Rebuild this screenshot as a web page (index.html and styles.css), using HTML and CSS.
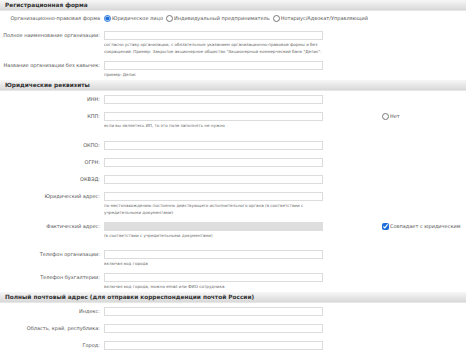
FILE: index.html
```html
<!DOCTYPE html>
<html lang="ru">
  <head>
    <meta charset="UTF-8" />
    <title>Регистрационная форма</title>
    <link rel="stylesheet" href="styles.css">
  </head>
  <body>
    <form class="reg-form">
      <div class="section-title">Регистрационная форма</div>

      <div class="row row-options">
        <label class="label">Организационно-правовая форма</label>
        <div class="options">
          <label class="opt"><input type="radio" name="kind" checked> Юридическое лицо</label>
          <label class="opt"><input type="radio" name="kind"> Индивидуальный предприниматель</label>
          <label class="opt"><input type="radio" name="kind"> Нотариус/Адвокат/Управляющий</label>
        </div>
      </div>

      <div class="row with-hint">
        <label class="label">Полное наименование организации:</label>
        <div class="field">
          <input type="text" class="text">
          <div class="hint">согласно уставу организации, с обязательным указанием организационно-правовой формы и без сокращений. Пример: Закрытое акционерное общество "Акционерный коммерческий банк "Делис".</div>
        </div>
      </div>

      <div class="row with-hint">
        <label class="label">Название организации без кавычек:</label>
        <div class="field">
          <input type="text" class="text">
          <div class="hint">пример: Делис</div>
        </div>
      </div>

      <div class="section-title">Юридические реквизиты</div>

      <div class="row">
        <label class="label">ИНН:</label>
        <div class="field"><input type="text" class="text"></div>
      </div>

      <div class="row with-hint">
        <label class="label">КПП:</label>
        <div class="field">
          <input type="text" class="text">
          <div class="hint">если вы являетесь ИП, то это поле заполнять не нужно</div>
        </div>
        <label class="extra"><input type="radio" name="kpp"> Нет</label>
      </div>

      <div class="row spaced">
        <label class="label">ОКПО:</label>
        <div class="field"><input type="text" class="text"></div>
      </div>

      <div class="row">
        <label class="label">ОГРН:</label>
        <div class="field"><input type="text" class="text"></div>
      </div>

      <div class="row">
        <label class="label">ОКВЭД:</label>
        <div class="field"><input type="text" class="text"></div>
      </div>

      <div class="row with-hint">
        <label class="label">Юридический адрес:</label>
        <div class="field">
          <input type="text" class="text">
          <div class="hint">по местонахождению постоянно действующего исполнительного органа (в соответствии с учредительными документами)</div>
        </div>
      </div>

      <div class="row with-hint">
        <label class="label">Фактический адрес:</label>
        <div class="field">
          <input type="text" class="text disabled" disabled>
          <div class="hint">(в соответствии с учредительными документами)</div>
        </div>
        <label class="extra"><input type="checkbox" checked> Совпадает с юридическим</label>
      </div>

      <div class="row with-hint spaced-sm">
        <label class="label">Телефон организации:</label>
        <div class="field">
          <input type="text" class="text">
          <div class="hint">включая код города</div>
        </div>
      </div>

      <div class="row with-hint">
        <label class="label">Телефон бухгалтерии:</label>
        <div class="field">
          <input type="text" class="text">
          <div class="hint">включая код города, можно email или ФИО сотрудника</div>
        </div>
      </div>

      <div class="section-title">Полный почтовый адрес (для отправки корреспонденции почтой России)</div>

      <div class="row">
        <label class="label">Индекс:</label>
        <div class="field"><input type="text" class="text"></div>
      </div>

      <div class="row">
        <label class="label">Область, край, республика:</label>
        <div class="field"><input type="text" class="text"></div>
      </div>

      <div class="row">
        <label class="label">Город:</label>
        <div class="field"><input type="text" class="text"></div>
      </div>
    </form>
  </body>
</html>
```

FILE: styles.css
```css
body {
  margin: 0;
  background: #fff;
  font-family: "DejaVu Sans", Verdana, sans-serif;
  font-size: 5px;
  color: #555;
}
.reg-form {
  width: 466px;
}
.section-title {
  height: 10px;
  line-height: 10px;
  padding-left: 5px;
  font-size: 5.8px;
  font-weight: bold;
  color: #333;
  background: linear-gradient(#f7f7f7, #d8d8d8);
  border-bottom: 1px solid #e6e6e6;
}
.row {
  display: grid;
  grid-template-columns: 100px 219px 1fr;
  column-gap: 4px;
  align-items: start;
  padding: 4px 0;
}
.row-options {
  padding-top: 3px;
}
.row.with-hint {
  padding-bottom: 2px;
}
.row.spaced {
  padding-top: 10px;
}
.row.spaced-sm {
  padding-top: 9px;
}
.label {
  text-align: right;
  line-height: 9px;
  white-space: nowrap;
}
.text {
  display: block;
  box-sizing: border-box;
  width: 219px;
  height: 9px;
  margin: 0;
  padding: 0 2px;
  border: 1px solid #dcdcdc;
  background: #fff;
  font: inherit;
}
.text.disabled {
  background: #dedede;
  border-color: #dedede;
}
.hint {
  margin-top: 1px;
  font-size: 4.1px;
  line-height: 7px;
  color: #666;
}
.options {
  grid-column: 2 / 4;
  display: flex;
  gap: 3px;
  line-height: 9px;
}
.opt, .extra {
  display: flex;
  align-items: center;
  gap: 1px;
  line-height: 9px;
  white-space: nowrap;
}
.extra {
  margin-left: 55px;
}
input[type="radio"],
input[type="checkbox"] {
  width: 7px;
  height: 7px;
  margin: 0;
  accent-color: #1c6fd8;
}
```
